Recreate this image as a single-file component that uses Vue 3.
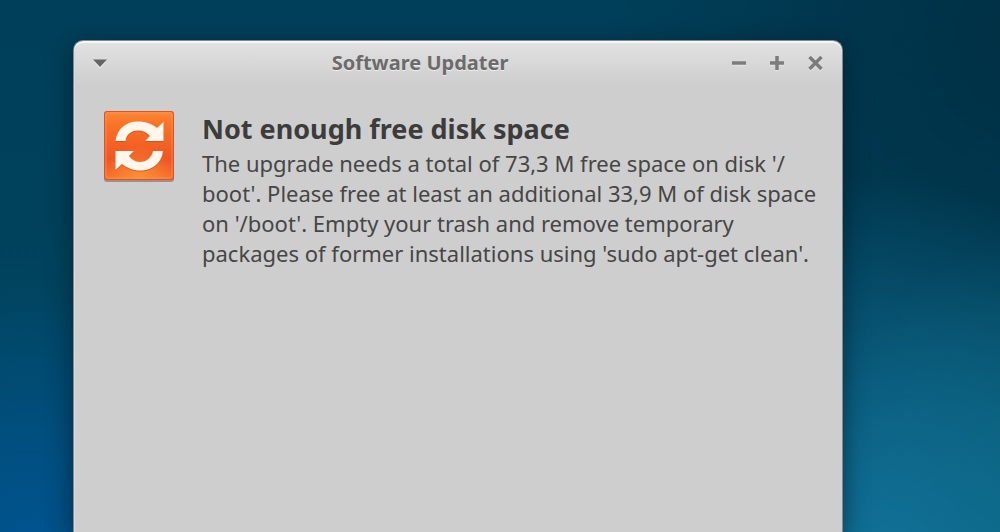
<script setup>
const title = 'Software Updater'
const heading = 'Not enough free disk space'
</script>

<template>
  <div class="desktop">
    <section class="window" aria-labelledby="window-title">
      <header class="titlebar">
        <button class="tool" type="button" aria-label="Window menu">
          <svg width="18" height="18" viewBox="0 0 18 18" aria-hidden="true">
            <path class="lit" d="M2 6.500h14l-7 8z" />
            <path class="menu" d="M2 5.500h14l-7 7.500z" />
          </svg>
        </button>
        <h1 id="window-title" class="title">{{ title }}</h1>
        <div class="controls">
          <button class="tool" type="button" aria-label="Minimize">
            <svg width="18" height="18" viewBox="0 0 18 18" aria-hidden="true">
              <path class="lit-line" d="M1 10h14" />
              <path class="mark" d="M1 9h14" />
            </svg>
          </button>
          <button class="tool" type="button" aria-label="Maximize">
            <svg width="18" height="18" viewBox="0 0 18 18" aria-hidden="true">
              <path class="lit-line" d="M1 10h14M8 3v14" />
              <path class="mark" d="M1 9h14M8 2v14" />
            </svg>
          </button>
          <button class="tool" type="button" aria-label="Close">
            <svg width="18" height="18" viewBox="0 0 18 18" aria-hidden="true">
              <path class="lit-line" d="M2.500 4l12 12M14.500 4l-12 12" />
              <path class="mark" d="M2.500 3l12 12M14.500 3l-12 12" />
            </svg>
          </button>
        </div>
      </header>

      <main class="content">
        <svg class="emblem" width="72" height="72" viewBox="0 0 72 72" aria-hidden="true">
          <defs>
            <linearGradient id="tile" x1="0" y1="0" x2="0" y2="1">
              <stop offset="0" stop-color="#fb8637" />
              <stop offset="0.2" stop-color="#f97226" />
              <stop offset="0.7" stop-color="#ef5524" />
              <stop offset="1" stop-color="#f7722c" />
            </linearGradient>
            <radialGradient id="glow" cx="0.5" cy="1" r="0.5">
              <stop offset="0" stop-color="#ff9838" stop-opacity="0.8" />
              <stop offset="1" stop-color="#ff9838" stop-opacity="0" />
            </radialGradient>
          </defs>
          <rect x="1" y="2" width="70" height="70" rx="3" fill="#a08f88" />
          <rect x="1" y="1" width="70" height="69" rx="3" fill="#d9532f" />
          <rect x="2" y="2" width="68" height="67" rx="2" fill="url(#tile)" />
          <rect x="2" y="2" width="68" height="67" rx="2" fill="url(#glow)" />
          <rect x="3" y="3" width="66" height="65" rx="2" fill="none" stroke="#ff9c5c" stroke-opacity="0.6" />
          <path fill="#b93d18" fill-opacity="0.5" d="M12.500 32C14 20 23 12.500 35 12.500C43 12.500 49 15 54 19L60.500 13V32H42L47 27C44 23.500 40 21.500 35 21.500C28 21.500 23 26 22.500 32ZM60 42C59 54 49 61.500 37 61.500C30 61.500 24 59 19 55L12.500 61V42H31L26 47C29 51 33 53 37 53C44 53 49 48 50 42Z" />
          <path fill="#fff7ec" d="M12.500 31C14 19 23 11.500 35 11.500C43 11.500 49 14 54 18L60.500 12V31H42L47 26C44 22.500 40 20.500 35 20.500C28 20.500 23 25 22.500 31ZM60 41C59 53 49 60.500 37 60.500C30 60.500 24 58 19 54L12.500 60V41H31L26 46C29 50 33 52 37 52C44 52 49 47 50 41Z" />
        </svg>
        <div class="message">
          <h2 class="heading">{{ heading }}</h2>
          <p class="text">
            The upgrade needs a total of 73,3 M free space on disk '/<wbr />boot'. Please free at least an
            additional 33,9 M of disk space on '/boot'. Empty your trash and remove temporary packages of
            former installations using 'sudo apt-get clean'.
          </p>
        </div>
      </main>
    </section>
  </div>
</template>

<style>
body {
  margin: 0;
}
</style>

<style scoped>
.desktop {
  box-sizing: border-box;
  display: flex;
  height: 100vh;
  overflow: hidden;
  padding: 40px 157px 0 73px;
  font-family: "Noto Sans", "Open Sans", sans-serif;
  background:
    radial-gradient(ellipse 220px 260px at 3% 102%, rgba(0, 84, 148, 0.9) 0%, rgba(0, 84, 148, 0) 100%),
    radial-gradient(ellipse 320px 400px at 88% 108%, #12729a 0%, rgba(18, 114, 154, 0) 100%),
    radial-gradient(ellipse 240px 340px at 104% 108%, #0a6478 0%, rgba(10, 100, 120, 0) 100%),
    radial-gradient(ellipse 420px 460px at 102% 8%, #003044 0%, rgba(0, 48, 68, 0) 100%),
    linear-gradient(#003f5a, #00415b 40%, #024c6a 100%);
}

.window {
  box-sizing: border-box;
  flex: 1;
  border: 1px solid #85898a;
  border-bottom: 0;
  border-radius: 10px 10px 0 0;
  background: linear-gradient(#e2e2e2, #cecece 44px);
  box-shadow:
    inset 0 2px 0 #f6f6f6,
    inset 1px 0 0 #dcd8d6,
    0 6px 24px rgba(0, 20, 30, 0.6);
}

.titlebar {
  display: flex;
  align-items: center;
  justify-content: space-between;
  height: 44px;
  padding: 0 17px;
}

.tool {
  display: flex;
  padding: 0;
  border: 0;
  background: none;
}

.title {
  flex: 1;
  margin: 0;
  text-align: center;
  font-size: 20px;
  line-height: 24px;
  font-weight: 700;
  color: #6b6b6b;
  text-shadow: 0 1px 0 #eeeeee;
}

.controls {
  display: flex;
  gap: 20px;
}

.lit {
  fill: #efefef;
}

.menu {
  fill: #666666;
}

.mark,
.lit-line {
  fill: none;
  stroke: #7c7c7c;
  stroke-width: 3.5;
}

.lit-line {
  stroke: #e6e6e6;
}

.content {
  display: flex;
  align-items: flex-start;
  gap: 27px;
  padding: 25px 24px 24px 29px;
}

.emblem {
  flex: none;
}

.heading {
  margin: 0;
  font-size: 27px;
  line-height: 38px;
  font-weight: 700;
  color: #3c3c3c;
}

.message {
  flex: 1;
}

.text {
  margin: 0;
  font-size: 22px;
  line-height: 30px;
  color: #464646;
}
</style>
